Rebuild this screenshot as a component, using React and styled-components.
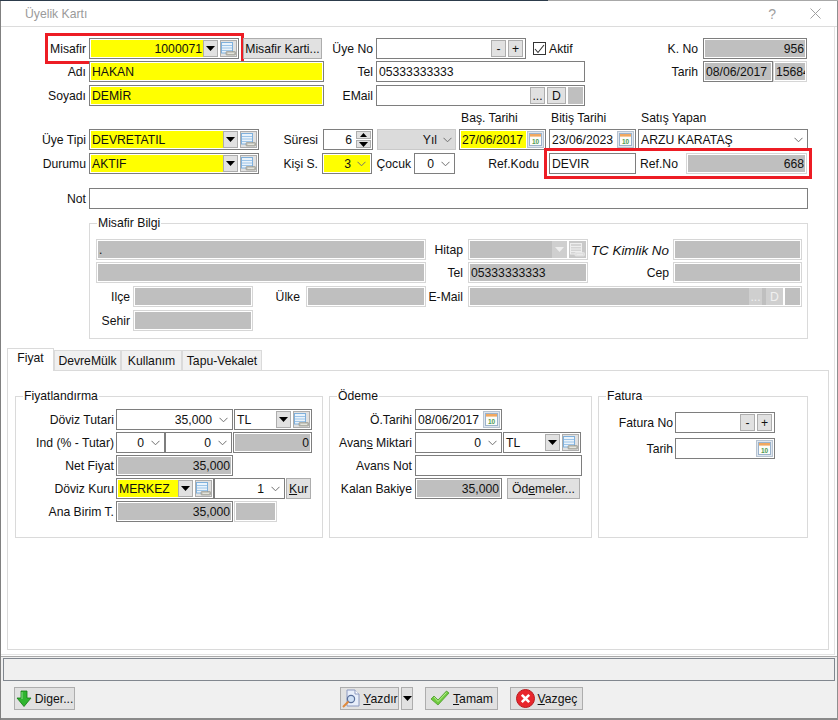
import React from "react";
import styled, { createGlobalStyle, css } from "styled-components";

const Global = createGlobalStyle`
  html, body { margin: 0; padding: 0; background: #8a8a8a; }
  * { box-sizing: border-box; }
  body { font-family: "Liberation Sans", Arial, sans-serif; font-size: 12.2px; color: #111; }
`;

const Window = styled.div`
  width: 838px; height: 720px; overflow: hidden; display: flex; flex-direction: column;
  background: #fff; padding-left: 1px; padding-right: 1px; padding-bottom: 2px;
  box-shadow: inset 1px 0 0 #808080, inset -1px 0 0 #8f8f8f, inset 0 -2px 0 #8a8a8a;
`;
const TopEdge = styled.div`
  flex: none; height: 1px; margin: 0 -1px;
  background: linear-gradient(90deg, #2c3b4b 0, #2c3b4b 548px, #a8a8a8 548px, #a8a8a8 100%);
`;
const TitleBar = styled.div`
  flex: none; height: 26px; display: flex; align-items: center; padding: 0 16px 0 24px;
  border-bottom: 1px solid #dcdcdc; color: #9a9a9a;
`;
const TitleText = styled.span`flex: 1;`;
const Help = styled.span`font-size: 14px; color: #a0a0a0; margin-right: 34px;`;

const Main = styled.main`
  flex: 1; width: 834px; padding-top: 11px; margin-left: 0;
  border-right: 1px solid #e4e4e4; border-bottom: 1px solid #e4e4e4;
`;

const Row = styled.div`
  display: flex; height: 21px; align-items: stretch;
  margin-top: ${p => p.$mt || 0}px;
  padding-left: ${p => p.$pl || 0}px;
`;
const Label = styled.label`
  flex: none; width: ${p => p.$w}px; margin-left: ${p => p.$ml || 0}px;
  display: flex; align-items: center; justify-content: ${p => (p.$left ? "flex-start" : "flex-end")};
  white-space: nowrap; padding-top: ${p => p.$pt ?? 1}px;
  ${p => p.$italic && css`font-style: italic; font-size: 13.4px;`}
`;
const Field = styled.div`
  flex: none; display: flex; width: ${p => p.$w}px; margin-left: ${p => p.$ml || 0}px;
  border: 1px solid ${p => (p.$dim ? "#d6d6d6" : "#7e7e7e")}; padding: 1px; background: #fff;
  overflow: hidden;
`;
const Value = styled.div`
  flex: 1; min-width: 0; display: flex; align-items: center; overflow: hidden; white-space: nowrap;
  justify-content: ${p => (p.$right ? "flex-end" : "flex-start")};
  background: ${p => p.$fill || "#fff"};
  padding: ${p => (p.$right ? "0 1px 0 0" : "0 0 0 1px")};
  ${p => p.$slim && css`flex: none; width: ${p.$slim}px;`}
`;
const Yellow = "#ffff00";
const Grey = "#bfbfbf";

const Highlight = styled.div`
  display: flex; flex: none; margin-left: ${p => p.$ml || 0}px;
  outline: 3px solid #ed1c24; outline-offset: 2px;
`;

const Btn = styled.button`
  flex: none; width: ${p => p.$w}px; margin-left: ${p => p.$ml || 0}px; padding: 0;
  font: inherit; color: #111; background: #e1e1e1; border: 1px solid #adadad;
  display: flex; align-items: center; justify-content: center; white-space: nowrap;
`;
const MiniBtn = styled(Btn)`
  ${p => p.$off && css`background: #cfcfcf; border-color: #cfcfcf; color: #f0f0f0;`}
`;
const Arrow = styled(Btn)`
  width: 15px;
  ${p => p.$off && css`background: #cfcfcf; border-color: #cfcfcf;`}
`;
const DropBtn = styled(Btn)`height: 23px;`;
const IconBtn = styled(Btn)`
  width: ${p => p.$w || 17}px; margin-left: 2px;
  ${p => p.$off && css`background: #c8c8c8; border-color: #c8c8c8;`}
`;
const CalBtn = styled(Btn)`width: 17px; margin-left: 1px; background: #dfe6ee; border-color: #b7c3d0;`;
const GreyEnd = styled.div`flex: none; width: ${p => p.$w || 15}px; margin-left: ${p => p.$ml ?? 2}px; background: ${Grey};`;

const Tri = ({ c = "#000" }) => (
  <svg width="9" height="5" viewBox="0 0 9 5"><path d="M0 0h9L4.5 5z" fill={c} /></svg>
);
const ChevWrap = styled.span`flex: none; display: flex; align-items: center; padding: 0 3px 0 6px;`;
const Chev = () => (
  <ChevWrap>
    <svg width="9" height="6" viewBox="0 0 9 6"><path d="M.5 .8 4.5 4.8 8.5 .8" fill="none" stroke="#6f6f6f" /></svg>
  </ChevWrap>
);
const Lookup = ({ off }) => (
  <svg width="15" height="14" viewBox="0 0 15 14">
    <rect x=".5" y=".5" width="11" height="10.5" fill={off ? "#d4d4d4" : "#eaf3fb"} stroke={off ? "#eee" : "#7fb0dc"} />
    <path d="M1 3.5h10M1 6h10M1 8.5h10" stroke={off ? "#eee" : "#9cc4e8"} />
    <rect x="5" y="9.5" width="9.5" height="3.5" rx=".8" fill={off ? "#ddd" : "#bdbdb4"} stroke={off ? "#eee" : "#929288"} strokeWidth=".6" />
    <path d="M6.5 11.3h6.5" stroke={off ? "#eee" : "#eeeee6"} />
  </svg>
);
const Calendar = () => (
  <svg width="13" height="13" viewBox="0 0 13 13">
    <rect x=".5" y=".5" width="12" height="12" fill="#fdfdf8" stroke="#9ab2cc" />
    <rect x="1" y="1" width="11" height="2.6" fill="#f0a860" />
    <text x="6.5" y="10.6" textAnchor="middle" fontSize="6.5" fontFamily="Liberation Sans" fontWeight="700" fill="#4f9a55">10</text>
  </svg>
);
const Lookups = ({ off }) => (
  <>
    <Arrow $off={off}><Tri c={off ? "#eee" : "#000"} /></Arrow>
    <IconBtn $off={off}><Lookup off={off} /></IconBtn>
  </>
);

const Check = styled.span`
  flex: none; width: 13px; height: 13px; border: 1px solid #333; background: #fff; display: flex;
  align-items: center; justify-content: center;
`;
const AktifWrap = styled.div`
  flex: none; display: flex; align-items: center; gap: 3px; width: 120px; margin-left: 7px;
`;
const SpinCol = styled.div`
  flex: none; width: 15px; display: flex; flex-direction: column; gap: 1px; margin-left: 3px;
`;
const SpinBtn = styled(Btn)`width: 15px; height: 8px; flex: 1;`;
const Disabled = styled.div`
  flex: none; width: ${p => p.$w}px; margin-left: ${p => p.$ml || 0}px; display: flex; align-items: center;
  justify-content: flex-end; background: #dbdbdb; border: 1px solid #c9c9c9;
`;
const HeadRow = styled.div`display: flex; height: 19px; margin-top: 4px; padding-left: 460px; padding-top: 1px;`;
const HeadCell = styled.span`flex: none; width: ${p => p.$w}px;`;

const Group = styled.section`
  position: relative; flex: none; border: 1px solid #dadada;
  width: ${p => p.$w}px; height: ${p => p.$h}px; margin-left: ${p => p.$ml || 0}px;
  margin-top: ${p => p.$mt || 0}px; padding-top: ${p => p.$pt || 0}px;
`;
const GroupTitle = styled.h3`
  position: absolute; top: -8px; left: 7px; margin: 0; padding: 0 1px; background: #fff;
  font: inherit; line-height: 15px;
`;

const Tabs = styled.div`display: flex; align-items: flex-end; height: 22px; margin: 9px 0 0 6px; position: relative; z-index: 1;`;
const Tab = styled.div`
  flex: none; width: ${p => p.$w}px; height: ${p => (p.$active ? 23 : 20)}px; display: flex; align-items: center;
  justify-content: center; border: 1px solid #dadada; border-bottom: 0;
  background: ${p => (p.$active ? "#fff" : "#f0f0f0")};
  ${p => p.$active && css`padding-bottom: 4px; margin-bottom: -1px;`}
`;
const Panel = styled.div`
  width: 822px; height: 280px; margin-left: 6px; border: 1px solid #dadada;
  display: flex; gap: 6px; padding: 25px 0 0 7px;
`;

const Footer = styled.footer`
  flex: none; height: 62px; margin-top: 1px; background: #f0f0f0; border-top: 1px solid #a9a9a9;
  padding: 1px 2px 0 2px;
`;
const Status = styled.div`height: 23px; border: 1px solid #81878f; background: #f0f0f0;`;
const Actions = styled.div`display: flex; height: 23px; margin-top: 6px; padding-left: 11px;`;
const ActionBtn = styled(Btn)`gap: 3px; height: 23px;`;
const U = styled.span`text-decoration: underline;`;

const DownIcon = () => (
  <svg width="16" height="17" viewBox="0 0 16 17">
    <path d="M5 1h6v7h4l-7 8.5L1 8h4z" fill="#2fb52f" stroke="#137a13" strokeWidth=".8" />
    <path d="M6 2v7" stroke="#8be08b" />
  </svg>
);
const PrintIcon = () => (
  <svg width="19" height="19" viewBox="0 0 19 19">
    <path d="M6 1h8l4 4v12H6z" fill="#e8eefa" stroke="#8d9ac0" />
    <path d="M14 1v4h4" fill="#fff" stroke="#8d9ac0" />
    <circle cx="10" cy="10" r="3.6" fill="#cfe0f5" stroke="#5a6f9a" strokeWidth="1.2" />
    <path d="M7.5 12.5 2 18" stroke="#e08a3c" strokeWidth="2" />
  </svg>
);
const OkIcon = () => (
  <svg width="20" height="17" viewBox="0 0 20 17">
    <path d="M1 9 4 6l4 4 8.5-9L19 3 8 15z" fill="#6fca3f" stroke="#4d9c2b" strokeWidth=".8" />
    <path d="M4 7l4 4.5L16.5 2.5" fill="none" stroke="#b8ee90" />
  </svg>
);
const CancelIcon = () => (
  <svg width="19" height="19" viewBox="0 0 19 19">
    <circle cx="9.5" cy="9.5" r="9" fill="#e8262c" stroke="#b81a1e" />
    <path d="M5.8 5.8l7.4 7.4M13.2 5.8l-7.4 7.4" stroke="#fff" strokeWidth="2.6" />
  </svg>
);

export default function App() {
  return (
    <Window>
      <Global />
      <TopEdge />
      <TitleBar>
        <TitleText>Üyelik Kartı</TitleText>
        <Help>?</Help>
        <svg width="11" height="11" viewBox="0 0 11 11"><path d="M.5.5l10 10M10.5.5l-10 10" stroke="#a0a0a0" /></svg>
      </TitleBar>
      <Main>
        <Row>
          <Highlight $ml={49}>
            <Label $w={36}>Misafir</Label>
            <Field $w={150} $ml={3}>
              <Value $right $fill={Yellow}>1000071</Value>
              <Lookups />
            </Field>
          </Highlight>
          <Btn $w={79} $ml={4}>Misafir Karti...</Btn>
          <Label $w={51}>Üye No</Label>
          <Field $w={150} $ml={3}>
            <Value />
            <MiniBtn $w={15}>-</MiniBtn>
            <MiniBtn $w={15} $ml={2}>+</MiniBtn>
            <Value $slim={1} />
          </Field>
          <AktifWrap>
            <Check>
              <svg width="11" height="10" viewBox="0 0 11 10"><path d="M1 5l3 3.5L10 1" fill="none" stroke="#333" strokeWidth="1.1" /></svg>
            </Check>
            Aktif
          </AktifWrap>
          <Label $w={45}>K. No</Label>
          <Field $w={104} $ml={5}><Value $right $fill={Grey}>956</Value></Field>
        </Row>
        <Row $mt={2}>
          <Label $w={85}>Adı</Label>
          <Field $w={235} $ml={3}><Value $fill={Yellow}>HAKAN</Value></Field>
          <Label $w={49}>Tel</Label>
          <Field $w={209} $ml={3}><Value>05333333333</Value></Field>
          <Label $w={113}>Tarih</Label>
          <Field $w={70} $ml={5}><Value $fill={Grey}>08/06/2017</Value></Field>
          <Field $w={34} $dim><Value $fill={Grey}>15684</Value></Field>
        </Row>
        <Row $mt={3}>
          <Label $w={85}>Soyadı</Label>
          <Field $w={235} $ml={3}><Value $fill={Yellow}>DEMİR</Value></Field>
          <Label $w={49}>EMail</Label>
          <Field $w={209} $ml={3}>
            <Value />
            <MiniBtn $w={15}>...</MiniBtn>
            <MiniBtn $w={19} $ml={2}>D</MiniBtn>
            <GreyEnd />
          </Field>
        </Row>
        <HeadRow>
          <HeadCell $w={90}>Baş. Tarihi</HeadCell>
          <HeadCell $w={90}>Bitiş Tarihi</HeadCell>
          <HeadCell $w={100}>Satış Yapan</HeadCell>
        </HeadRow>
        <Row>
          <Label $w={85}>Üye Tipi</Label>
          <Field $w={170} $ml={3}><Value $fill={Yellow}>DEVRETATIL</Value><Lookups /></Field>
          <Label $w={59}>Süresi</Label>
          <Field $w={50} $ml={5}>
            <Value $right>6</Value>
            <SpinCol>
              <SpinBtn><svg width="7" height="4" viewBox="0 0 7 4"><path d="M0 4h7L3.5 0z" /></svg></SpinBtn>
              <SpinBtn><Tri /></SpinBtn>
            </SpinCol>
          </Field>
          <Disabled $w={79} $ml={4}>Yıl<Chev /></Disabled>
          <Field $w={87} $ml={3}><Value $fill={Yellow}>27/06/2017</Value><CalBtn><Calendar /></CalBtn></Field>
          <Field $w={87} $ml={3}><Value>23/06/2023</Value><CalBtn><Calendar /></CalBtn></Field>
          <Field $w={170} $ml={2}><Value>ARZU KARATAŞ</Value><Chev /></Field>
        </Row>
        <Row $mt={3}>
          <Label $w={85}>Durumu</Label>
          <Field $w={170} $ml={3}><Value $fill={Yellow}>AKTIF</Value><Lookups /></Field>
          <Label $w={59}>Kişi S.</Label>
          <Field $w={50} $ml={4}><Value $right $fill={Yellow}>3<Chev /></Value></Field>
          <Label $w={36} $ml={3}>Çocuk</Label>
          <Field $w={41} $ml={3}><Value $right>0</Value><Chev /></Field>
          <Label $w={84}>Ref.Kodu</Label>
          <Highlight $ml={10}>
            <Field $w={87}><Value>DEVIR</Value></Field>
            <Label $w={38} $ml={4} $left>Ref.No</Label>
            <Field $w={121} $ml={8} $dim><Value $right $fill={Grey}>668</Value></Field>
          </Highlight>
        </Row>
        <Row $mt={14}>
          <Label $w={85}>Not</Label>
          <Field $w={719} $ml={3}><Value /></Field>
        </Row>

        <Group $w={719} $h={116} $ml={88} $mt={14} $pt={15}>
          <GroupTitle>Misafir Bilgi</GroupTitle>
          <Row $pl={6}>
            <Field $w={330} $dim><Value $fill={Grey}>.</Value></Field>
            <Label $w={37}>Hitap</Label>
            <Field $w={120} $ml={5} $dim><Value $fill={Grey} /><Lookups off /></Field>
            <Label $w={81} $italic>TC Kimlik No</Label>
            <Field $w={129} $ml={4} $dim><Value $fill={Grey} /></Field>
          </Row>
          <Row $pl={6} $mt={2}>
            <Field $w={330} $dim><Value $fill={Grey} /></Field>
            <Label $w={37}>Tel</Label>
            <Field $w={120} $ml={5} $dim><Value $fill={Grey}>05333333333</Value></Field>
            <Label $w={81}>Cep</Label>
            <Field $w={129} $ml={4} $dim><Value $fill={Grey} /></Field>
          </Row>
          <Row $mt={3}>
            <Label $w={40}>Ilçe</Label>
            <Field $w={120} $ml={3} $dim><Value $fill={Grey} /></Field>
            <Label $w={47} $pt={0}>Ülke</Label>
            <Field $w={120} $ml={6} $dim><Value $fill={Grey} /></Field>
            <Label $w={37}>E-Mail</Label>
            <Field $w={334} $ml={5} $dim>
              <Value $fill={Grey} />
              <MiniBtn $w={13} $off>...</MiniBtn>
              <GreyEnd $w={4} $ml={0} />
              <MiniBtn $w={17} $off>D</MiniBtn>
              <GreyEnd />
            </Field>
          </Row>
          <Row $mt={3}>
            <Label $w={40}>Sehir</Label>
            <Field $w={120} $ml={3} $dim><Value $fill={Grey} /></Field>
          </Row>
        </Group>

        <Tabs>
          <Tab $active $w={47}>Fiyat</Tab>
          <Tab $w={67}>DevreMülk</Tab>
          <Tab $w={61}>Kullanım</Tab>
          <Tab $w={80}>Tapu-Vekalet</Tab>
        </Tabs>
        <Panel>
          <Group $w={308} $h={142} $pt={12}>
            <GroupTitle>Fiyatlandırma</GroupTitle>
            <Row>
              <Label $w={98}>Döviz Tutari</Label>
              <Field $w={117} $ml={2}><Value $right>35,000</Value><Chev /></Field>
              <Field $w={78} $ml={1}><Value>TL</Value><Lookups /></Field>
            </Row>
            <Row $mt={2}>
              <Label $w={98}>Ind (% - Tutar)</Label>
              <Field $w={49} $ml={2}><Value $right>0</Value><Chev /></Field>
              <Field $w={67}><Value $right>0</Value><Chev /></Field>
              <Field $w={79} $ml={1}><Value $right $fill={Grey}>0</Value></Field>
            </Row>
            <Row $mt={2}>
              <Label $w={98}>Net Fiyat</Label>
              <Field $w={117} $ml={2}><Value $right $fill={Grey}>35,000</Value></Field>
            </Row>
            <Row $mt={2}>
              <Label $w={98}>Döviz Kuru</Label>
              <Field $w={98} $ml={2}><Value $fill={Yellow}>MERKEZ</Value><Lookups /></Field>
              <Field $w={71}><Value $right>1</Value><Chev /></Field>
              <Btn $w={25} $ml={1}><span><U>K</U>ur</span></Btn>
            </Row>
            <Row $mt={2}>
              <Label $w={98}>Ana Birim T.</Label>
              <Field $w={117} $ml={2}><Value $right $fill={Grey}>35,000</Value></Field>
              <Field $w={43} $ml={1} $dim><Value $fill={Grey} /></Field>
            </Row>
          </Group>
          <Group $w={263} $h={142} $pt={12}>
            <GroupTitle>Ödeme</GroupTitle>
            <Row>
              <Label $w={82}>Ö.Tarihi</Label>
              <Field $w={87} $ml={3}><Value>08/06/2017</Value><CalBtn><Calendar /></CalBtn></Field>
            </Row>
            <Row $mt={2}>
              <Label $w={82}><span>Avan<U>s</U> Miktari</span></Label>
              <Field $w={87} $ml={3}><Value $right>0</Value><Chev /></Field>
              <Field $w={78} $ml={1}><Value>TL</Value><Lookups /></Field>
            </Row>
            <Row $mt={2}>
              <Label $w={82}>Avans Not</Label>
              <Field $w={167} $ml={3}><Value /></Field>
            </Row>
            <Row $mt={2}>
              <Label $w={82}>Kalan Bakiye</Label>
              <Field $w={87} $ml={3}><Value $right $fill={Grey}>35,000</Value></Field>
              <Btn $w={73} $ml={5}><span>Öd<U>e</U>meler...</span></Btn>
            </Row>
          </Group>
          <Group $w={210} $h={142} $pt={15}>
            <GroupTitle>Fatura</GroupTitle>
            <Row>
              <Label $w={74}>Fatura No</Label>
              <Field $w={100} $ml={2}>
                <Value />
                <MiniBtn $w={15}>-</MiniBtn>
                <MiniBtn $w={15} $ml={2}>+</MiniBtn>
                <Value $slim={1} />
              </Field>
            </Row>
            <Row $mt={5}>
              <Label $w={74}>Tarih</Label>
              <Field $w={100} $ml={2}><Value /><CalBtn><Calendar /></CalBtn></Field>
            </Row>
          </Group>
        </Panel>
      </Main>
      <Footer>
        <Status />
        <Actions>
          <ActionBtn $w={61}><DownIcon /><span>Di<U>g</U>er...</span></ActionBtn>
          <ActionBtn $w={59} $ml={265}><PrintIcon /><span><U>Y</U>azdır</span></ActionBtn>
          <DropBtn $w={12} $ml={2}><Tri /></DropBtn>
          <ActionBtn $w={73} $ml={12}><OkIcon /><span><U>T</U>amam</span></ActionBtn>
          <ActionBtn $w={73} $ml={12}><CancelIcon /><span><U>V</U>azgeç</span></ActionBtn>
        </Actions>
      </Footer>
    </Window>
  );
}
